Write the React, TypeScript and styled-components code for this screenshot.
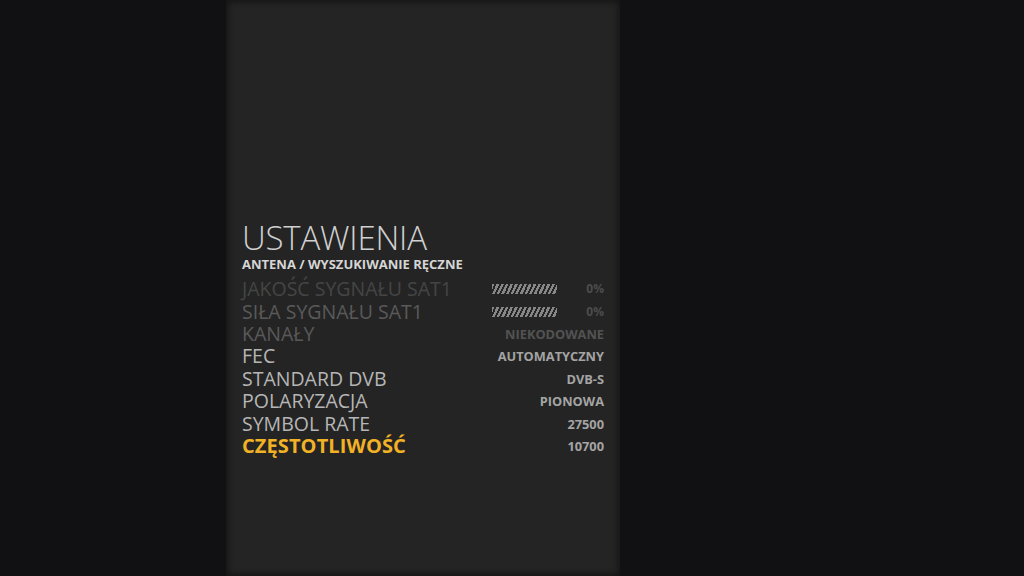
import React from "react";
import styled, { createGlobalStyle } from "styled-components";

const Global = createGlobalStyle`
  html, body { margin: 0; padding: 0; background: #111114; }
  body { font-family: "Open Sans", "Noto Sans", sans-serif; }
`;

const Screen = styled.div`
  width: 1024px;
  height: 576px;
  background: #111114;
  display: flex;
  overflow: hidden;
`;

const Panel = styled.div`
  margin-left: 226px;
  width: 394px;
  height: 576px;
  background: #242424;
  box-shadow: 0 0 6px 2px rgba(0, 0, 0, 0.45) inset;
  box-sizing: border-box;
  padding: 221px 16px 0 16px;
  display: flex;
  flex-direction: column;
`;

const Title = styled.div`
  font-size: 33px;
  font-weight: 300;
  color: #d0d0d0;
  line-height: 34px;
  letter-spacing: -0.2px;
`;

const Subtitle = styled.div`
  font-size: 13px;
  font-weight: 700;
  color: #d6d6d6;
  line-height: 16px;
  margin-top: 1px;
  margin-bottom: 6px;
`;

const List = styled.div`
  display: flex;
  flex-direction: column;
`;

const Row = styled.div`
  height: 22.4px;
  display: flex;
  align-items: center;
`;

const Label = styled.div<{ $active?: boolean; $fade: number }>`
  flex: 1;
  font-size: ${(p) => (p.$active ? "20px" : "19.5px")};
  line-height: 22px;
  font-weight: ${(p) => (p.$active ? 700 : 400)};
  color: ${(p) => (p.$active ? "#f2b226" : "#b6b6b6")};
  opacity: ${(p) => p.$fade};
  white-space: nowrap;
  letter-spacing: ${(p) => (p.$active ? "0.1px" : "0")};
`;

const Value = styled.div<{ $fade: number }>`
  font-size: 12.8px;
  line-height: 16px;
  font-weight: 700;
  color: #a4a4a4;
  opacity: ${(p) => p.$fade};
  text-align: right;
  white-space: nowrap;
`;

const Bar = styled.div`
  width: 65px;
  height: 10px;
  margin-right: 24px;
  opacity: 0.8;
  background: repeating-linear-gradient(
    115deg,
    #a0a0a0 0px,
    #a0a0a0 2.4px,
    transparent 2.4px,
    transparent 4.2px
  );
`;

const Percent = styled.div`
  width: 23px;
  font-size: 12px;
  line-height: 16px;
  font-weight: 700;
  color: #4c4c4c;
  text-align: right;
`;

type Item = { label: string; value: string; bar?: boolean; fade: number; active?: boolean };

const items: Item[] = [
  { label: "JAKOŚĆ SYGNAŁU SAT1", value: "0%", bar: true, fade: 0.22 },
  { label: "SIŁA SYGNAŁU SAT1", value: "0%", bar: true, fade: 0.36 },
  { label: "KANAŁY", value: "NIEKODOWANE", fade: 0.36 },
  { label: "FEC", value: "AUTOMATYCZNY", fade: 1 },
  { label: "STANDARD DVB", value: "DVB-S", fade: 1 },
  { label: "POLARYZACJA", value: "PIONOWA", fade: 1 },
  { label: "SYMBOL RATE", value: "27500", fade: 1 },
  { label: "CZĘSTOTLIWOŚĆ", value: "10700", fade: 1, active: true },
];

export default function App() {
  return (
    <>
      <Global />
      <Screen>
        <Panel>
          <Title>USTAWIENIA</Title>
          <Subtitle>ANTENA / WYSZUKIWANIE RĘCZNE</Subtitle>
          <List>
            {items.map((it) => (
              <Row key={it.label}>
                <Label $active={it.active} $fade={it.fade}>
                  {it.label}
                </Label>
                {it.bar ? (
                  <>
                    <Bar />
                    <Percent>{it.value}</Percent>
                  </>
                ) : (
                  <Value $fade={it.fade}>{it.value}</Value>
                )}
              </Row>
            ))}
          </List>
        </Panel>
      </Screen>
    </>
  );
}
